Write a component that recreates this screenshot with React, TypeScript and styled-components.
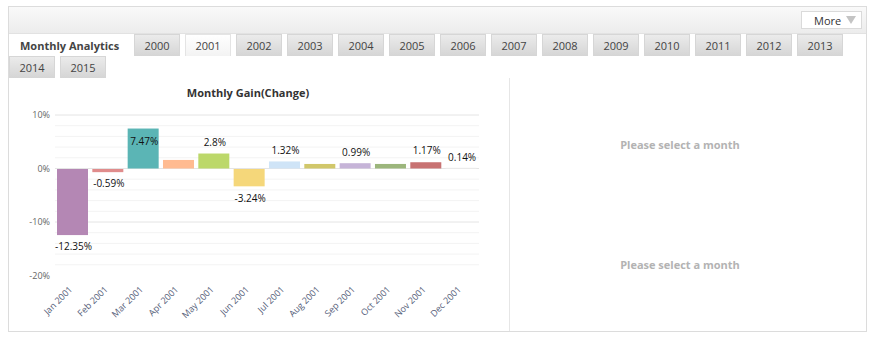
import styled, { createGlobalStyle } from "styled-components";

const GlobalStyle = createGlobalStyle`
  body {
    margin: 6px 8px 0;
    background: #ffffff;
    font-family: "Open Sans", "Liberation Sans", sans-serif;
  }
`;

const Panel = styled.div`
  border: 1px solid #dcdcdc;
  background: #ffffff;
  box-shadow: 0 2px 3px rgba(0, 0, 0, 0.14);
`;

const Header = styled.div`
  height: 26px;
  border-bottom: 1px solid #e2e2e2;
  background: linear-gradient(#f9f9f9, #ececec);
  display: flex;
  align-items: center;
  justify-content: flex-end;
  padding-right: 4px;
`;

const MoreButton = styled.div`
  width: 61px;
  height: 18px;
  box-sizing: border-box;
  border: 1px solid #dadada;
  background: #ffffff;
  display: flex;
  align-items: center;
  justify-content: space-between;
  padding: 0 5px 0 12px;
  font-size: 11px;
  color: #333333;
  cursor: pointer;
`;

const Caret = styled.span`
  width: 0;
  height: 0;
  border-left: 5px solid transparent;
  border-right: 5px solid transparent;
  border-top: 8px solid #c4c4c4;
`;

const TabStrip = styled.div`
  display: flex;
  flex-wrap: wrap;
`;

const TabTitle = styled.div`
  width: 120px;
  height: 22px;
  margin-right: 5px;
  padding-left: 11px;
  box-sizing: border-box;
  display: flex;
  align-items: center;
  font-size: 11px;
  font-weight: 700;
  color: #444444;
`;

const Tab = styled.div<{ $active?: boolean }>`
  width: 46px;
  height: 22px;
  margin-right: 5px;
  box-sizing: border-box;
  display: flex;
  align-items: center;
  justify-content: center;
  font-size: 11px;
  color: #444444;
  cursor: pointer;
  border: 1px solid ${(p) => (p.$active ? "#e4e4e4" : "#d6d6d6")};
  border-bottom: none;
  background: ${(p) =>
    p.$active
      ? "linear-gradient(#ffffff, #f3f3f3)"
      : "linear-gradient(#ebebeb, #d5d5d5)"};
`;

const Content = styled.div`
  display: grid;
  grid-template-columns: 501px 1fr;
  height: 253px;
`;

const ChartPane = styled.div`
  box-sizing: border-box;
  border-right: 1px solid #e6e6e6;
`;

const DetailPane = styled.div`
  padding: 6px 16px 0 0;
  display: flex;
  flex-direction: column;
`;

const Placeholder = styled.div`
  height: 120px;
  display: flex;
  align-items: center;
  justify-content: center;
  font-size: 11px;
  font-weight: 700;
  color: #b3b3b3;
`;

type Month = { label: string; value: number; color: string; text?: string; ty?: number };

const months: Month[] = [
  { label: "Jan 2001", value: -12.35, color: "#b487b4", text: "-12.35%", ty: 246 },
  { label: "Feb 2001", value: -0.59, color: "#e08c8c", text: "-0.59%", ty: 183 },
  { label: "Mar 2001", value: 7.47, color: "#5bb5b5", text: "7.47%", ty: 141 },
  { label: "Apr 2001", value: 1.6, color: "#ffbb91" },
  { label: "May 2001", value: 2.8, color: "#bcd86a", text: "2.8%", ty: 142 },
  { label: "Jun 2001", value: -3.24, color: "#f5d77a", text: "-3.24%", ty: 198 },
  { label: "Jul 2001", value: 1.32, color: "#cfe4f7", text: "1.32%", ty: 150 },
  { label: "Aug 2001", value: 0.85, color: "#d1c76a" },
  { label: "Sep 2001", value: 0.99, color: "#c6b4d8", text: "0.99%", ty: 152 },
  { label: "Oct 2001", value: 0.85, color: "#9cb67c" },
  { label: "Nov 2001", value: 1.17, color: "#c87272", text: "1.17%", ty: 150 },
  { label: "Dec 2001", value: 0.14, color: "#f0f0f0", text: "0.14%", ty: 157 },
];

// chart coordinates are page coordinates shifted by the pane origin (9, 78)
const OX = 9;
const OY = 78;
const ZERO = 168.5 - OY;
const SCALE = 5.35;
const PLOT_LEFT = 55 - OX;
const PLOT_RIGHT = 479 - OX;
const PITCH = 35.33;
const FONT = "Open Sans, Liberation Sans, sans-serif";

function GainChart() {
  const grid: number[] = [];
  for (let v = 10; v >= -18; v -= 2) grid.push(v);

  return (
    <svg width="500" height="253" style={{ display: "block" }}>
      <text x={239} y={19} textAnchor="middle" fontSize="11" fontWeight="700" fill="#333" fontFamily={FONT}>
        Monthly Gain(Change)
      </text>

      {grid.map((v) => (
        <line
          key={v}
          x1={PLOT_LEFT}
          x2={PLOT_RIGHT}
          y1={ZERO - v * SCALE}
          y2={ZERO - v * SCALE}
          stroke={v % 10 === 0 ? "#e4e4e4" : "#f3f3f3"}
          strokeWidth="1"
        />
      ))}

      {[10, 0, -10, -20].map((v) => (
        <text key={v} x={41} y={ZERO - v * SCALE + 3} textAnchor="end" fontSize="9" fill="#666" fontFamily={FONT}>
          {v}%
        </text>
      ))}

      {months.map((m, i) => {
        const x = 57 - OX + i * PITCH;
        const h = Math.abs(m.value) * SCALE;
        const y = m.value >= 0 ? ZERO - h : ZERO + 0.5;
        const cx = x + 15.5;
        return (
          <g key={m.label}>
            <rect x={x} y={y} width={31} height={h} fill={m.color} />
            {m.text && (
              <text
                x={cx + 1}
                y={(m.ty ?? 0) - OY + 3.5}
                textAnchor="middle"
                fontSize="10"
                fill="#111"
                fontFamily={FONT}
              >
                {m.text}
              </text>
            )}
            <text
              x={cx + 0.5}
              y={290 - OY}
              textAnchor="end"
              fontSize="9"
              fill="#56607a"
              fontFamily={FONT}
              transform={`rotate(-45 ${cx + 0.5} ${290 - OY})`}
            >
              {m.label}
            </text>
          </g>
        );
      })}
    </svg>
  );
}

const years = Array.from({ length: 16 }, (_, i) => String(2000 + i));

export default function App() {
  return (
    <>
      <GlobalStyle />
      <Panel>
        <Header>
          <MoreButton>
            More
            <Caret />
          </MoreButton>
        </Header>
        <TabStrip>
          <TabTitle>Monthly Analytics</TabTitle>
          {years.map((y) => (
            <Tab key={y} $active={y === "2001"}>
              {y}
            </Tab>
          ))}
        </TabStrip>
        <Content>
          <ChartPane>
            <GainChart />
          </ChartPane>
          <DetailPane>
            <Placeholder>Please select a month</Placeholder>
            <Placeholder>Please select a month</Placeholder>
          </DetailPane>
        </Content>
      </Panel>
    </>
  );
}
